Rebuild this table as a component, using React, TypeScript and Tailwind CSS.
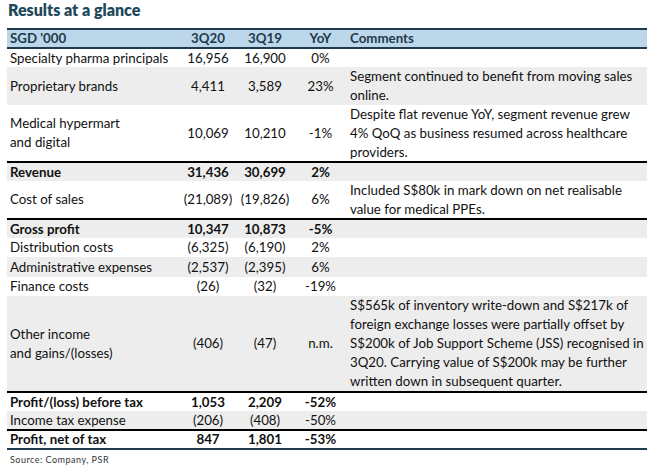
const rows = [
  { label: ["Specialty pharma principals"], a: "16,956", b: "16,900", y: "0%", h: "h-[18px]", bg: "bg-white" },
  { label: ["Proprietary brands"], a: "4,411", b: "3,589", y: "23%", h: "h-[38px]", bg: "bg-[#ededed]", c: ["Segment continued to benefit from moving sales", "online."] },
  { label: ["Medical hypermart", "and digital"], a: "10,069", b: "10,210", y: "-1%", h: "h-[56px]", bg: "bg-white", line: true, c: ["Despite flat revenue YoY, segment revenue grew", "4% QoQ as business resumed across healthcare", "providers."] },
  { label: ["Revenue"], a: "31,436", b: "30,699", y: "2%", h: "h-[18px]", bg: "bg-[#ededed]", bold: true },
  { label: ["Cost of sales"], a: "(21,089)", b: "(19,826)", y: "6%", h: "h-[37px]", bg: "bg-white", line: true, c: ["Included S$80k in mark down on net realisable", "value for medical PPEs."] },
  { label: ["Gross profit"], a: "10,347", b: "10,873", y: "-5%", h: "h-[18px]", bg: "bg-[#ededed]", bold: true },
  { label: ["Distribution costs"], a: "(6,325)", b: "(6,190)", y: "2%", h: "h-[19px]", bg: "bg-white" },
  { label: ["Administrative expenses"], a: "(2,537)", b: "(2,395)", y: "6%", h: "h-[20px]", bg: "bg-[#ededed]" },
  { label: ["Finance costs"], a: "(26)", b: "(32)", y: "-19%", h: "h-[19px]", bg: "bg-white" },
  { label: ["Other income", "and gains/(losses)"], a: "(406)", b: "(47)", y: "n.m.", h: "h-[95px]", bg: "bg-[#ededed]", line: true, c: ["S$565k of inventory write-down and S$217k of", "foreign exchange losses were partially offset by", "S$200k of Job Support Scheme (JSS) recognised in", "3Q20. Carrying value of S$200k may be further", "written down in subsequent quarter."] },
  { label: ["Profit/(loss) before tax"], a: "1,053", b: "2,209", y: "-52%", h: "h-[18px]", bg: "bg-white", bold: true },
  { label: ["Income tax expense"], a: "(206)", b: "(408)", y: "-50%", h: "h-[18px]", bg: "bg-[#ededed]", line: true },
  { label: ["Profit, net of tax"], a: "847", b: "1,801", y: "-53%", h: "h-[17px]", bg: "bg-white", bold: true },
];

export default function App() {
  return (
    <div className="h-[472px] w-[653px] bg-white text-[13.3px] leading-[19px] text-[#111]" style={{ fontFamily: "Lato, 'Liberation Sans', sans-serif" }}>
      <div className="pl-[8px] pt-[1px] text-[16px] font-extrabold leading-[18px] text-[#1f4a5c]">
        Results at a glance
      </div>

      <div className="ml-[7px] mt-[9px] w-[640px]">
        <div className="flex h-[21px] items-center border-y-2 border-[#1d3b4c] bg-[#bdd7ea] font-bold text-[#1d3b4c]">
          <div className="w-[173px] pl-[3px]">SGD '000</div>
          <div className="w-[56px] text-center">3Q20</div>
          <div className="w-[58px] text-center">3Q19</div>
          <div className="w-[53px] text-center">YoY</div>
          <div className="flex-1 pl-[3px]">Comments</div>
        </div>

        {rows.map((r, i) => (
          <div
            key={i}
            className={`flex items-center ${r.h} ${r.bg} ${r.bold ? "font-bold" : ""} ${r.line ? "border-b-2 border-black box-content" : ""}`}
          >
            <div className="w-[173px] pl-[3px] leading-[19px]">
              {r.label.map((l) => (
                <div key={l}>{l}</div>
              ))}
            </div>
            <div className="w-[56px] text-center">{r.a}</div>
            <div className="w-[58px] text-center">{r.b}</div>
            <div className="w-[53px] text-center">{r.y}</div>
            <div className="flex-1 pl-[3px] leading-[19px]">
              {r.c?.map((l) => (
                <div key={l}>{l}</div>
              ))}
            </div>
          </div>
        ))}
        <div className="h-[2px] bg-[#1d3b4c]" />
      </div>

      <div className="mt-[4px] pl-[10px] text-[9px] leading-[12px] tracking-[0.5px] text-[#333]">
        Source: Company, PSR
      </div>
    </div>
  );
}
